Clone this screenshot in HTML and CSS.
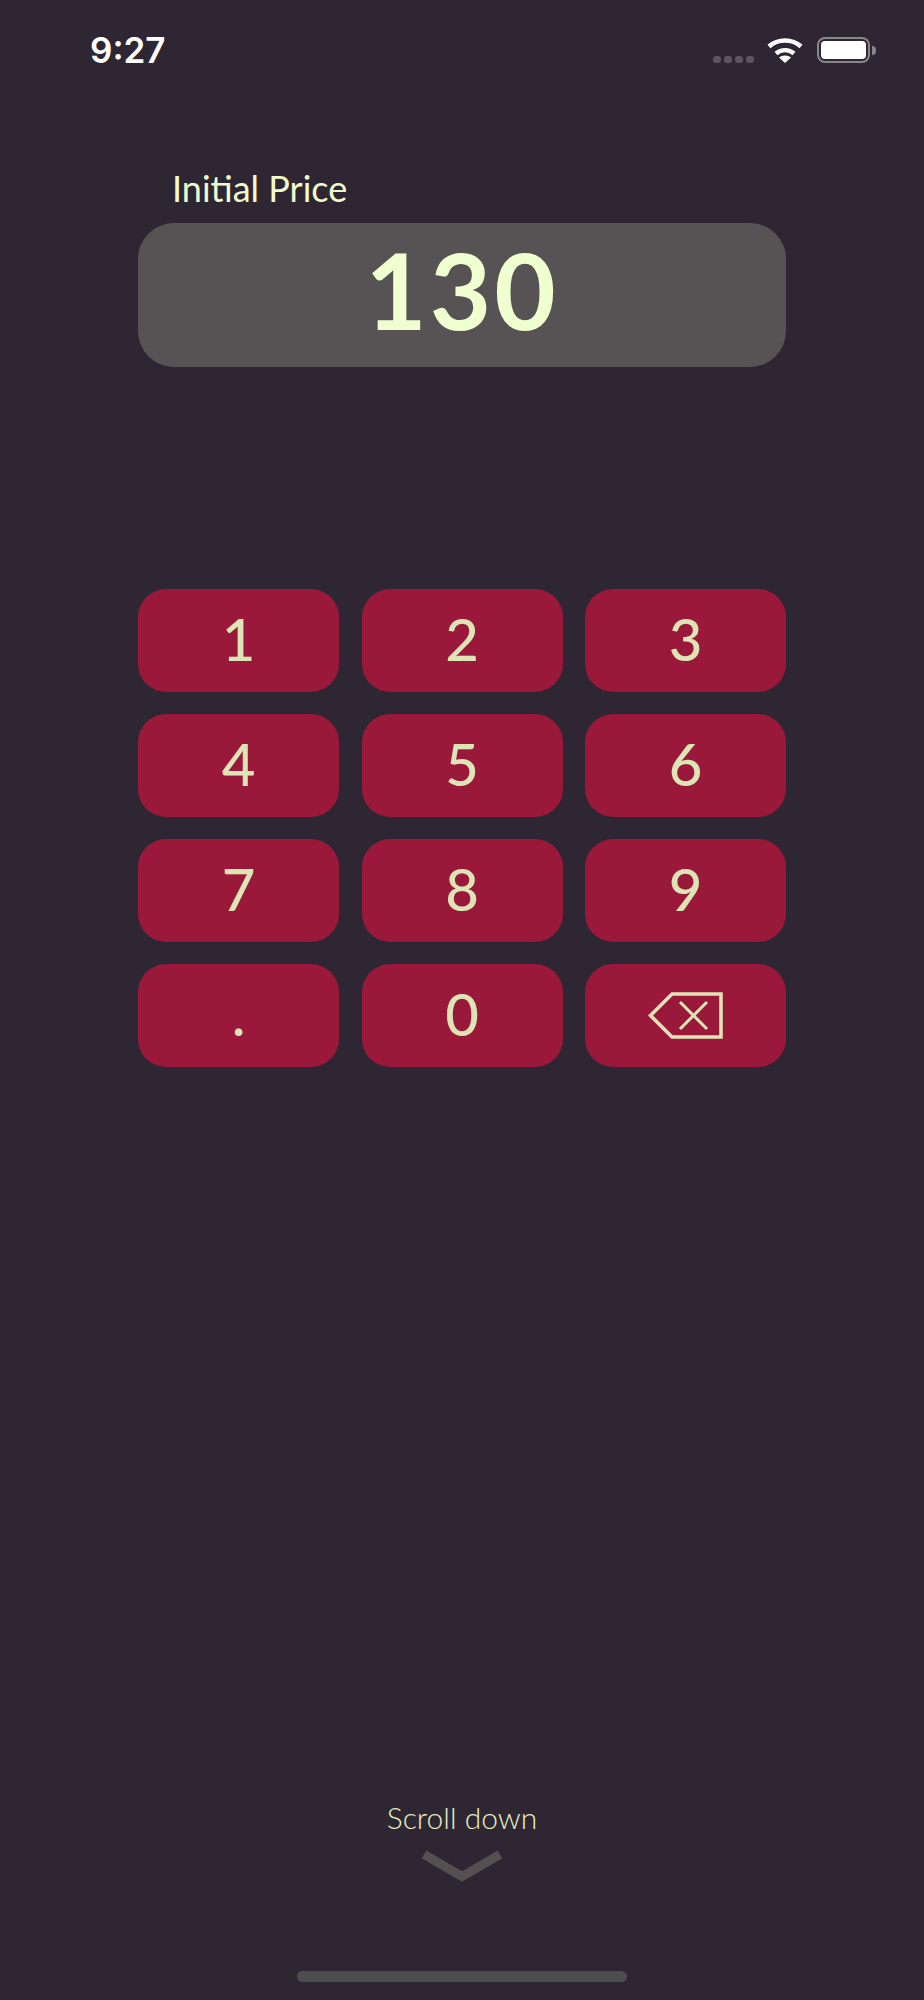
FILE: index.html
```html
<!DOCTYPE html>
<html lang="en">
<head>
    <meta charset="UTF-8">
    <meta name="viewport" content="width=device-width, initial-scale=1.0">
    <title>Initial Price</title>
    <link rel="stylesheet" href="styles.css">
</head>
<body>
    <div class="screen">
        <header class="status-bar">
            <span class="time">9:27</span>
            <div class="status-icons">
                <div class="signal">
                    <span class="dot"></span>
                    <span class="dot"></span>
                    <span class="dot"></span>
                    <span class="dot"></span>
                </div>
                <svg class="wifi" width="36" height="26" viewBox="0 0 36 26">
                    <path d="M2 9.500C11 1.500 25 1.500 34 9.500" fill="none" stroke="#fff" stroke-width="4.600"/>
                    <path d="M9 16.500C14 12 22 12 27 16.500" fill="none" stroke="#fff" stroke-width="4.400"/>
                    <path d="M18 26L12 20.500C15 17.800 21 17.800 24 20.500Z" fill="#fff"/>
                </svg>
                <div class="battery">
                    <div class="battery-body"><div class="battery-fill"></div></div>
                    <div class="battery-nib"></div>
                </div>
            </div>
        </header>

        <main class="calculator">
            <label class="price-label">Initial Price</label>
            <div class="price-display">130</div>

            <div class="keypad">
                <button class="key">1</button>
                <button class="key">2</button>
                <button class="key">3</button>
                <button class="key">4</button>
                <button class="key">5</button>
                <button class="key">6</button>
                <button class="key">7</button>
                <button class="key">8</button>
                <button class="key">9</button>
                <button class="key">.</button>
                <button class="key">0</button>
                <button class="key key-delete" aria-label="Delete">
                    <svg width="76" height="47" viewBox="0 0 76 47">
                        <path d="M2.500 23.500L24 2H73V45H24Z" fill="none" stroke="#dde5b6" stroke-width="3.600"/>
                        <path d="M32 10L59 37M59 10L32 37" fill="none" stroke="#dde5b6" stroke-width="3"/>
                    </svg>
                </button>
            </div>
        </main>

        <footer class="scroll-hint">
            <span class="scroll-text">Scroll down</span>
            <svg class="chevron" width="80" height="32" viewBox="0 0 80 32">
                <path d="M2 4.500L40 26.500L78 4.500" fill="none" stroke="#544f51" stroke-width="9"/>
            </svg>
            <div class="home-bar"></div>
        </footer>
    </div>
</body>
</html>
```

FILE: styles.css
```css
* {
    margin: 0;
    padding: 0;
    box-sizing: border-box;
}

body {
    background: #2e2733;
    font-family: 'Lato', 'Noto Sans', sans-serif;
}

.screen {
    height: 2000px;
    display: flex;
    flex-direction: column;
    overflow: hidden;
}

.status-bar {
    display: flex;
    justify-content: space-between;
    align-items: center;
    height: 26px;
    margin-top: 37px;
    padding: 0 48px 0 90px;
}

.time {
    color: white;
    font-family: 'Inter', sans-serif;
    font-size: 35px;
    font-weight: 600;
    line-height: 27px;
}

.status-icons {
    display: flex;
    align-items: flex-end;
    height: 26px;
}

.signal {
    display: flex;
    gap: 3px;
    margin-right: 13px;
}

.dot {
    width: 8px;
    height: 7px;
    border-radius: 3px;
    background: #5d5660;
}

.wifi {
    margin-right: 14px;
}

.battery {
    display: flex;
    align-items: center;
    height: 26px;
}

.battery-body {
    width: 53px;
    height: 26px;
    padding: 2px;
    border: 2px solid #8a848c;
    border-radius: 8px;
}

.battery-fill {
    height: 100%;
    background: white;
    border-radius: 4px;
}

.battery-nib {
    width: 4px;
    height: 9px;
    margin-left: 2px;
    background: #8a848c;
    border-radius: 0 4px 4px 0;
}

.calculator {
    width: 648px;
    margin: 0 auto;
    display: flex;
    flex-direction: column;
}

.price-label {
    margin: 103px 0 0 34px;
    height: 57px;
    color: #f0fccb;
    font-size: 36px;
    line-height: 45px;
}

.price-display {
    height: 144px;
    padding-bottom: 11px;
    background: #575354;
    border-radius: 36px;
    color: #efffcf;
    font-size: 106px;
    font-weight: 700;
    letter-spacing: 3px;
    line-height: 133px;
    text-align: center;
}

.keypad {
    display: grid;
    grid-template-columns: repeat(3, 1fr);
    grid-auto-rows: 103px;
    column-gap: 22.500px;
    row-gap: 22px;
    margin-top: 222px;
}

.key {
    display: flex;
    align-items: center;
    justify-content: center;
    padding-bottom: 5px;
    background: #9a1839;
    border: none;
    border-radius: 28px;
    color: #dde5b6;
    font-family: inherit;
    font-size: 58px;
    font-weight: 500;
}

.key-delete {
    padding-bottom: 0;
}

.scroll-hint {
    margin-top: auto;
    display: flex;
    flex-direction: column;
    align-items: center;
    padding-bottom: 18px;
}

.scroll-text {
    color: #e6edc0;
    font-size: 30px;
    font-weight: 300;
    line-height: 36px;
}

.chevron {
    margin-top: 15px;
}

.home-bar {
    width: 330px;
    height: 11px;
    margin-top: 89px;
    background: #4d4d4d;
    border-radius: 6px;
}
```
